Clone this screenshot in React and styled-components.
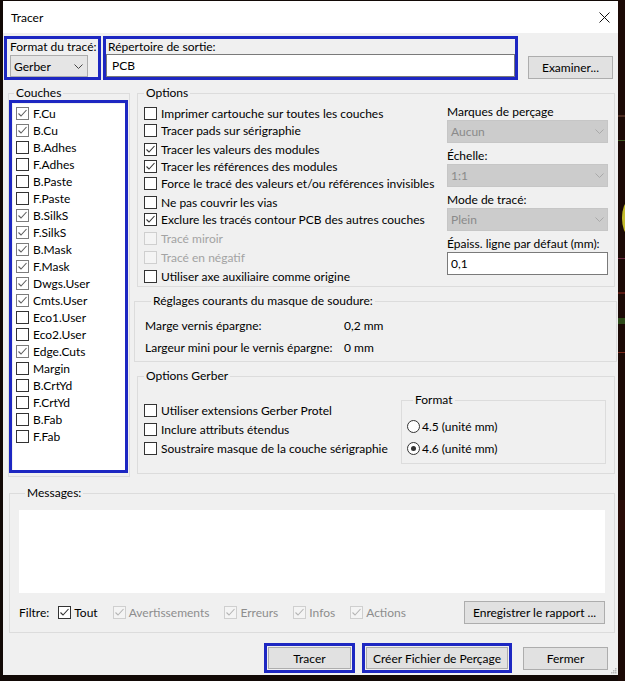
import React from 'react';
import styled, { createGlobalStyle } from 'styled-components';

const BLUE = '#1d27c2';

const GlobalStyle = createGlobalStyle`
  html, body {
    margin: 0;
    padding: 0;
    background: #120906;
  }
  body {
    font-family: Lato, "Liberation Sans", "Noto Sans", sans-serif;
    font-size: 12px;
    color: #000;
  }
  * {
    box-sizing: border-box;
  }
`;

const Stage = styled.div`
  width: 625px;
  height: 681px;
  display: flex;
  overflow: hidden;
  background: #120906;
`;

const Window = styled.div`
  position: relative;
  flex: none;
  width: 615px;
  height: 674px;
  margin: 1px 0 0 3px;
  background: #f0f0f0;
  display: flex;
  flex-direction: column;
`;

const Backdrop = styled.svg`
  flex: none;
  display: block;
  width: 7px;
  height: 681px;
`;

const TitleBar = styled.div`
  flex: none;
  height: 32px;
  background: #fff;
  display: flex;
  align-items: center;
  justify-content: space-between;
  padding: 0 8px;
`;

const Title = styled.span`
  font-size: 12px;
`;

const TopRow = styled.div`
  display: flex;
  align-items: flex-end;
  height: 44px;
  margin-top: 3px;
  padding-left: 1px;
`;

// the blue frames are annotations drawn over the dialog
const Highlight = styled.div`
  flex: none;
  border: 3px solid ${BLUE};
`;

const FormatBox = styled(Highlight)`
  width: 97px;
  height: 44px;
  padding: 1px 0 0 3px;
`;

const OutputBox = styled(Highlight)`
  width: 415px;
  height: 44px;
  margin-left: 2px;
  padding: 1px 0 0 0;
`;

const LayerFrame = styled(Highlight)`
  width: 119px;
  height: 373px;
  padding: 1px 0 0 1px;
`;

const ButtonFrame = styled(Highlight)`
  height: 30px;
  padding: 1px;
  margin-left: ${p => p.$gap || 0}px;
`;

const FieldLabel = styled.div`
  line-height: 14px;
  white-space: nowrap;
  padding-left: ${p => p.$indent || 0}px;
  margin-bottom: ${p => p.$below || 0}px;
`;

const Combo = styled.div`
  display: flex;
  align-items: center;
  justify-content: space-between;
  width: ${p => (p.$w ? `${p.$w}px` : '100%')};
  height: ${p => p.$h || 23}px;
  margin-top: ${p => p.$top || 0}px;
  padding: 0 ${p => (p.$disabled ? 3 : 4)}px 0 3px;
  background: ${p => (p.$disabled ? '#cccccc' : '#e5e5e5')};
  border: 1px solid ${p => (p.$disabled ? '#c6c6c6' : '#acacac')};
  color: ${p => (p.$disabled ? '#8a8a8a' : '#000')};
`;

const TextBox = styled.div`
  display: flex;
  align-items: center;
  height: 23px;
  width: 100%;
  padding-left: ${p => p.$indent || 3}px;
  background: #fff;
  border: 1px solid #7a7a7a;
`;

const Button = styled.button`
  flex: none;
  font: inherit;
  color: #000;
  width: ${p => p.$w}px;
  height: ${p => p.$h || 23}px;
  margin-left: ${p => (p.$push ? 'auto' : `${p.$gap || 0}px`)};
  margin-bottom: ${p => p.$lift || 0}px;
  padding: 0;
  background: #e1e1e1;
  border: 1px solid #adadad;
`;

const MainRow = styled.div`
  display: flex;
  align-items: flex-start;
  margin-top: 6px;
  padding-left: 5px;
`;

const Group = styled.fieldset`
  margin: 0;
  padding: 0;
  min-width: 0;
  border: 1px solid #dcdcdc;
`;

const Legend = styled.legend`
  padding: 0 2px;
  margin-left: ${p => p.$offset ?? 6}px;
  line-height: 14px;
  font-size: 12px;
  white-space: nowrap;
`;

const LayersGroup = styled(Group)`
  flex: none;
  width: 122px;
  padding: 0 1px 3px 0;
`;

const LayerList = styled.div`
  height: 100%;
  background: #fff;
  padding-top: 1px;
`;

const LayerRow = styled.div`
  display: flex;
  align-items: center;
  height: 17px;
  padding-left: 3px;
  white-space: nowrap;
`;

const SideColumn = styled.div`
  flex: none;
  width: 483px;
  margin-left: 4px;
  display: flex;
  flex-direction: column;
`;

const OptionsGroup = styled(Group)`
  margin: 0 2px 0 3px;
  padding: 5px 0 1px 0;
  display: grid;
  grid-template-columns: 309px 161px;
`;

const CheckColumn = styled.div`
  flex: none;
  display: flex;
  flex-direction: column;
  width: ${p => (p.$w ? `${p.$w}px` : 'auto')};
  padding-left: 6px;
  padding-top: ${p => p.$top || 0}px;
`;

const OptionRow = styled.label`
  display: flex;
  align-items: center;
  height: ${p => p.$h || 17}px;
  margin-top: ${p => (p.$spaced ? 2 : 0)}px;
  white-space: nowrap;
  color: ${p => (p.$disabled ? '#a3a3a3' : '#000')};
`;

const ControlColumn = styled.div`
  display: flex;
  flex-direction: column;
  gap: 6px;
`;

const Control = styled.div`
  display: flex;
  flex-direction: column;
`;

const MaskGroup = styled(Group)`
  margin-top: 7px;
  padding: 6px 0 3px 10px;
  display: grid;
  grid-template-columns: 199px auto;
  grid-auto-rows: 22px;
  align-items: center;
`;

const GerberGroup = styled(Group)`
  margin: 7px 2px 0 3px;
  padding: 0 0 9px 0;
  display: flex;
  align-items: flex-start;
`;

const FormatGroup = styled(Group)`
  flex: none;
  width: 205px;
  margin-top: 10px;
  padding: 8px 0 4px 5px;
`;

const RadioRow = styled.label`
  display: flex;
  align-items: center;
  height: 22px;
  white-space: nowrap;
`;

const RadioDot = styled.span`
  flex: none;
  width: 13px;
  height: 13px;
  margin-right: 2px;
  border-radius: 50%;
  border: 1px solid #333;
  background: #fff;
  display: inline-flex;
  align-items: center;
  justify-content: center;

  &::after {
    content: '';
    width: 5px;
    height: 5px;
    border-radius: 50%;
    background: #333;
    display: ${p => (p.$on ? 'block' : 'none')};
  }
`;

const MessagesGroup = styled(Group)`
  width: 606px;
  margin: 9px 0 0 6px;
  padding: 10px 0 8px 9px;
`;

const MessageArea = styled.div`
  width: 586px;
  height: 83px;
  background: #fff;
`;

const FilterRow = styled.div`
  display: flex;
  align-items: center;
  width: 586px;
  height: 24px;
  margin-top: 7px;
  white-space: nowrap;
`;

const FilterLabel = styled.span`
  margin-right: 9px;
`;

const FilterItem = styled.label`
  display: flex;
  align-items: center;
  margin-right: 15px;
  color: ${p => (p.$disabled ? '#8d8d8d' : '#000')};
`;

const Footer = styled.div`
  display: flex;
  align-items: center;
  justify-content: flex-end;
  height: 30px;
  margin-top: 10px;
  padding-right: 10px;
`;

const Box = styled.span`
  flex: none;
  width: 13px;
  height: 13px;
  margin-right: ${p => p.$gap}px;
  border: 1px solid ${p => p.$tone.border};
  background: ${p => p.$tone.bg};
  display: inline-flex;
  align-items: center;
  justify-content: center;
`;

const Grip = styled.svg`
  position: absolute;
  right: 1px;
  bottom: 1px;
`;

const TONES = {
  normal: { border: '#333333', bg: '#ffffff', mark: '#333333' },
  list: { border: '#333333', bg: '#ffffff', mark: '#5e5e5e' },
  listOn: { border: '#7c7c7c', bg: '#ffffff', mark: '#5e5e5e' },
  disabled: { border: '#cfcfcf', bg: '#f4f4f4', mark: '#b5b5b5' },
};

const Check = ({ checked, tone = 'normal', gap = 4 }) => {
  const t = TONES[tone];
  return (
    <Box $tone={t} $gap={gap}>
      {checked && (
        <svg width="11" height="11" viewBox="0 0 11 11">
          <polyline points="1.5,5.5 4,8 9.5,2" fill="none" stroke={t.mark} strokeWidth="1.1" />
        </svg>
      )}
    </Box>
  );
};

const Chevron = ({ color = '#444' }) => (
  <svg width="9" height="5" viewBox="0 0 9 5">
    <polyline points="0.5,0.5 4.5,4.5 8.5,0.5" fill="none" stroke={color} strokeWidth="1" />
  </svg>
);

const LAYERS = [
  ['F.Cu', true], ['B.Cu', true], ['B.Adhes', false], ['F.Adhes', false],
  ['B.Paste', false], ['F.Paste', false], ['B.SilkS', true], ['F.SilkS', true],
  ['B.Mask', true], ['F.Mask', true], ['Dwgs.User', true], ['Cmts.User', true],
  ['Eco1.User', false], ['Eco2.User', false], ['Edge.Cuts', true], ['Margin', false],
  ['B.CrtYd', false], ['F.CrtYd', false], ['B.Fab', false], ['F.Fab', false],
];

const OPTIONS = [
  { label: 'Imprimer cartouche sur toutes les couches' },
  { label: 'Tracer pads sur sérigraphie' },
  { label: 'Tracer les valeurs des modules', checked: true, spaced: true },
  { label: 'Tracer les références des modules', checked: true },
  { label: 'Force le tracé des valeurs et/ou références invisibles' },
  { label: 'Ne pas couvrir les vias', spaced: true },
  { label: 'Exclure les tracés contour PCB des autres couches', checked: true },
  { label: 'Tracé miroir', disabled: true, spaced: true },
  { label: 'Tracé en négatif', disabled: true, spaced: true },
  { label: 'Utiliser axe auxiliaire comme origine', spaced: true },
];

const GERBER_OPTIONS = [
  'Utiliser extensions Gerber Protel',
  'Inclure attributs étendus',
  'Soustraire masque de la couche sérigraphie',
];

const SELECTS = [
  { label: 'Marques de perçage', value: 'Aucun' },
  { label: 'Échelle:', value: '1:1' },
  { label: 'Mode de tracé:', value: 'Plein' },
];

const FILTERS = ['Avertissements', 'Erreurs', 'Infos', 'Actions'];

export default function App() {
  return (
    <Stage>
      <GlobalStyle />
      <Window>
        <TitleBar>
          <Title>Tracer</Title>
          <svg width="11" height="11" viewBox="0 0 11 11">
            <path d="M0.5 0.5 L10.5 10.5 M10.5 0.5 L0.5 10.5" stroke="#111" strokeWidth="1" />
          </svg>
        </TitleBar>

        <TopRow>
          <FormatBox>
            <FieldLabel>Format du tracé:</FieldLabel>
            <Combo $w={78} $h={22} $top={1}>
              <span>Gerber</span>
              <Chevron />
            </Combo>
          </FormatBox>
          <OutputBox>
            <FieldLabel $indent={2}>Répertoire de sortie:</FieldLabel>
            <TextBox $indent={5}>PCB</TextBox>
          </OutputBox>
          <Button $w={85} $gap={10} $lift={1}>Examiner...</Button>
        </TopRow>

        <MainRow>
          <LayersGroup>
            <Legend $offset={5}>Couches</Legend>
            <LayerFrame>
              <LayerList>
                {LAYERS.map(([name, on]) => (
                  <LayerRow key={name}>
                    <Check checked={on} tone={on ? 'listOn' : 'list'} gap={4} />
                    {name}
                  </LayerRow>
                ))}
              </LayerList>
            </LayerFrame>
          </LayersGroup>

          <SideColumn>
            <OptionsGroup>
              <Legend>Options</Legend>
              <CheckColumn>
                {OPTIONS.map(o => (
                  <OptionRow key={o.label} $spaced={o.spaced} $disabled={o.disabled}>
                    <Check checked={o.checked} tone={o.disabled ? 'disabled' : 'normal'} />
                    {o.label}
                  </OptionRow>
                ))}
              </CheckColumn>
              <ControlColumn>
                {SELECTS.map(s => (
                  <Control key={s.label}>
                    <FieldLabel $below={1}>{s.label}</FieldLabel>
                    <Combo $disabled>
                      <span>{s.value}</span>
                      <Chevron color="#a9a9a9" />
                    </Combo>
                  </Control>
                ))}
                <Control>
                  <FieldLabel $below={1}>Épaiss. ligne par défaut (mm):</FieldLabel>
                  <TextBox>0,1</TextBox>
                </Control>
              </ControlColumn>
            </OptionsGroup>

            <MaskGroup>
              <Legend>Réglages courants du masque de soudure:</Legend>
              <span>Marge vernis épargne:</span>
              <span>0,2 mm</span>
              <span>Largeur mini pour le vernis épargne:</span>
              <span>0 mm</span>
            </MaskGroup>

            <GerberGroup>
              <Legend>Options Gerber</Legend>
              <CheckColumn $top={18} $w={263}>
                {GERBER_OPTIONS.map(label => (
                  <OptionRow key={label} $h={19}>
                    <Check />
                    {label}
                  </OptionRow>
                ))}
              </CheckColumn>
              <FormatGroup>
                <Legend>Format</Legend>
                <RadioRow>
                  <RadioDot />
                  4.5 (unité mm)
                </RadioRow>
                <RadioRow>
                  <RadioDot $on />
                  4.6 (unité mm)
                </RadioRow>
              </FormatGroup>
            </GerberGroup>
          </SideColumn>
        </MainRow>

        <MessagesGroup>
          <Legend>Messages:</Legend>
          <MessageArea />
          <FilterRow>
            <FilterLabel>Filtre:</FilterLabel>
            <FilterItem>
              <Check checked gap={3} />
              Tout
            </FilterItem>
            {FILTERS.map(label => (
              <FilterItem key={label} $disabled>
                <Check checked tone="disabled" gap={3} />
                {label}
              </FilterItem>
            ))}
            <Button $w={141} $push>Enregistrer le rapport ...</Button>
          </FilterRow>
        </MessagesGroup>

        <Footer>
          <ButtonFrame>
            <Button $w={83} $h={22}>Tracer</Button>
          </ButtonFrame>
          <ButtonFrame $gap={7}>
            <Button $w={142} $h={22}>Créer Fichier de Perçage</Button>
          </ButtonFrame>
          <Button $w={85} $gap={11}>Fermer</Button>
        </Footer>

        <Grip width="6" height="6" viewBox="0 0 6 6">
          {[[4, 0], [2, 2], [4, 2], [0, 4], [2, 4], [4, 4]].map(([x, y]) => (
            <rect key={`${x}-${y}`} x={x} y={y} width="1.5" height="1.5" fill="#b8b8b8" />
          ))}
        </Grip>
      </Window>

      <Backdrop viewBox="0 0 7 681" preserveAspectRatio="none">
        <rect width="7" height="681" fill="#1c0a06" />
        <rect x="0" y="115" width="7" height="2" fill="#4a2a20" />
        <rect x="0" y="140" width="7" height="1" fill="#3f5a24" />
        <ellipse cx="10" cy="218" rx="6" ry="16" fill="#c4bb2c" />
        <rect x="0" y="258" width="7" height="1" fill="#6a2a40" />
        <rect x="0" y="292" width="7" height="2" fill="#5a1a14" />
        <rect x="0" y="318" width="7" height="6" fill="#2e4a1a" />
        <rect x="0" y="352" width="7" height="1" fill="#7a2a1c" />
        <rect x="0" y="500" width="7" height="30" fill="#2a0c08" />
      </Backdrop>
    </Stage>
  );
}
